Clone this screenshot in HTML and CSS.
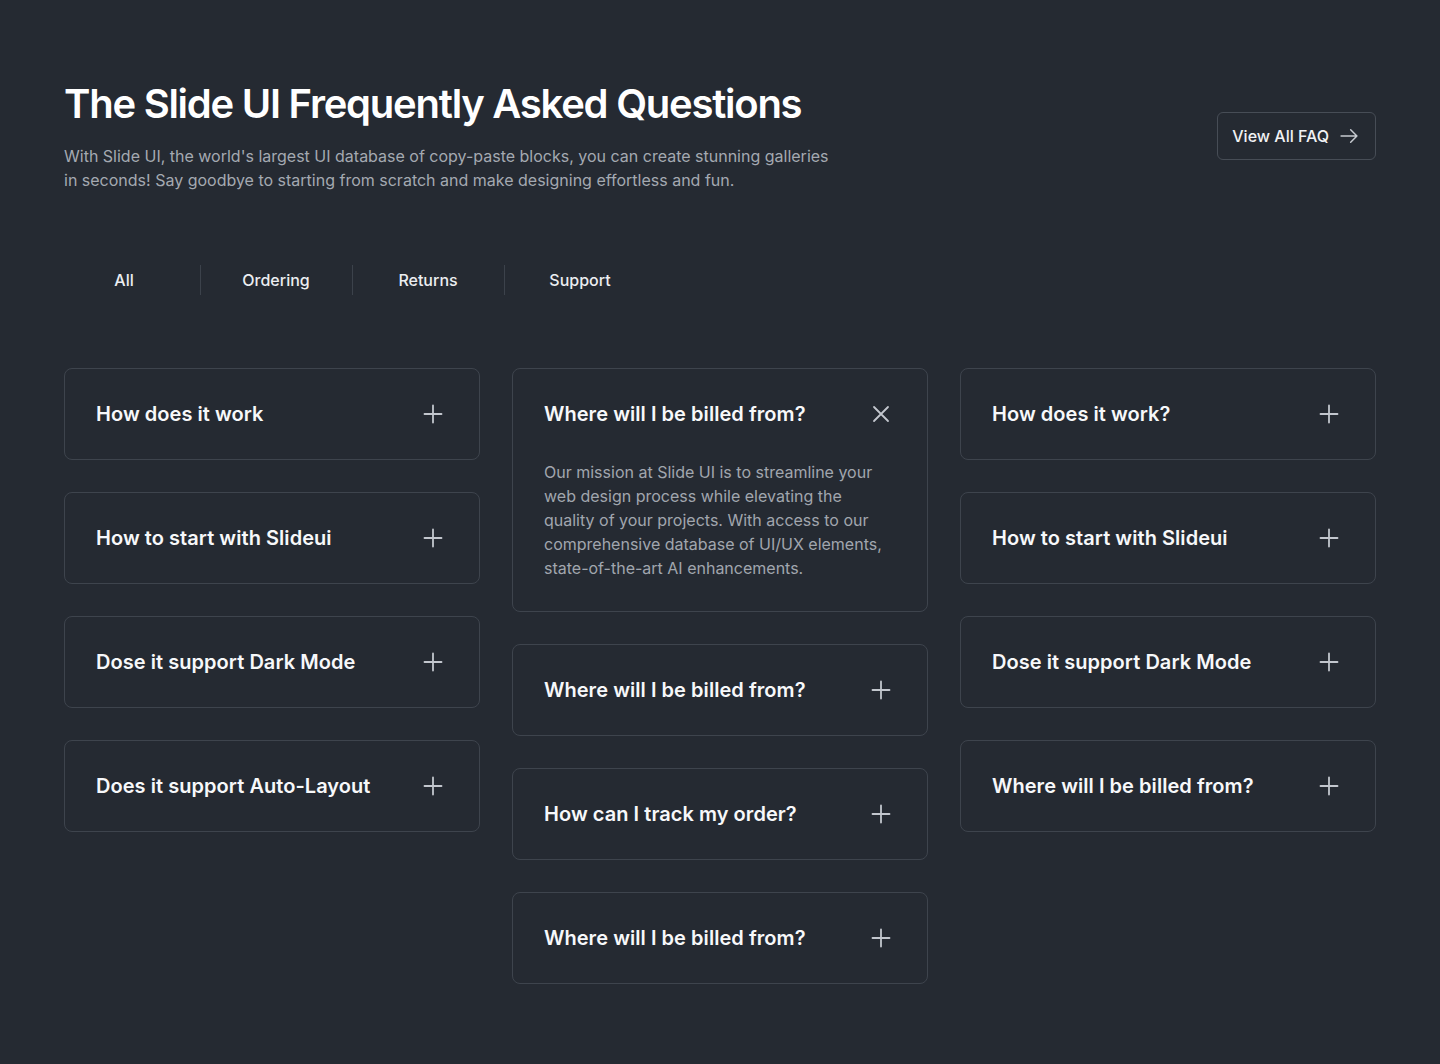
FILE: index.html
```html
<!DOCTYPE html>
<html lang="en">
<head>
<meta charset="utf-8">
<title>FAQ</title>
<link rel="stylesheet" href="styles.css">
</head>
<body>
<main class="page">
  <header class="top">
    <div class="intro">
      <h1 class="title">The Slide UI Frequently Asked Questions</h1>
      <p class="lead">With Slide UI, the world's largest UI database of copy-paste blocks, you can create stunning galleries in seconds! Say goodbye to starting from scratch and make designing effortless and fun.</p>
    </div>
    <a class="btn" href="#">View All FAQ
      <svg class="btn-icon" viewBox="0 0 24 24" fill="none" stroke="currentColor" stroke-width="1.8" stroke-linecap="round" stroke-linejoin="round"><path d="M2.5 12h19M14 4.5l7.5 7.5-7.5 7.5"/></svg>
    </a>
  </header>

  <nav class="tabs">
    <span class="tab">All</span>
    <span class="divider"></span>
    <span class="tab">Ordering</span>
    <span class="divider"></span>
    <span class="tab">Returns</span>
    <span class="divider"></span>
    <span class="tab">Support</span>
  </nav>

  <section class="grid">
    <div class="col">
      <div class="card"><div class="card-head"><span class="q">How does it work</span><svg class="ico" viewBox="0 0 24 24" fill="none" stroke="currentColor" stroke-width="1.8" stroke-linecap="round"><path d="M12 3.5v17M3.5 12h17"/></svg></div></div>
      <div class="card"><div class="card-head"><span class="q">How to start with Slideui</span><svg class="ico" viewBox="0 0 24 24" fill="none" stroke="currentColor" stroke-width="1.8" stroke-linecap="round"><path d="M12 3.5v17M3.5 12h17"/></svg></div></div>
      <div class="card"><div class="card-head"><span class="q">Dose it support Dark Mode</span><svg class="ico" viewBox="0 0 24 24" fill="none" stroke="currentColor" stroke-width="1.8" stroke-linecap="round"><path d="M12 3.5v17M3.5 12h17"/></svg></div></div>
      <div class="card"><div class="card-head"><span class="q">Does it support Auto-Layout</span><svg class="ico" viewBox="0 0 24 24" fill="none" stroke="currentColor" stroke-width="1.8" stroke-linecap="round"><path d="M12 3.5v17M3.5 12h17"/></svg></div></div>
    </div>
    <div class="col">
      <div class="card open">
        <div class="card-head"><span class="q">Where will I be billed from?</span><svg class="ico" viewBox="0 0 24 24" fill="none" stroke="currentColor" stroke-width="1.8" stroke-linecap="round"><path d="M5 5l14 14M19 5L5 19"/></svg></div>
        <p class="answer">Our mission at Slide UI is to streamline your web design process while elevating the quality of your projects. With access to our comprehensive database of UI/UX elements, state-of-the-art AI enhancements.</p>
      </div>
      <div class="card"><div class="card-head"><span class="q">Where will I be billed from?</span><svg class="ico" viewBox="0 0 24 24" fill="none" stroke="currentColor" stroke-width="1.8" stroke-linecap="round"><path d="M12 3.5v17M3.5 12h17"/></svg></div></div>
      <div class="card"><div class="card-head"><span class="q">How can I track my order?</span><svg class="ico" viewBox="0 0 24 24" fill="none" stroke="currentColor" stroke-width="1.8" stroke-linecap="round"><path d="M12 3.5v17M3.5 12h17"/></svg></div></div>
      <div class="card"><div class="card-head"><span class="q">Where will I be billed from?</span><svg class="ico" viewBox="0 0 24 24" fill="none" stroke="currentColor" stroke-width="1.8" stroke-linecap="round"><path d="M12 3.5v17M3.5 12h17"/></svg></div></div>
    </div>
    <div class="col">
      <div class="card"><div class="card-head"><span class="q">How does it work?</span><svg class="ico" viewBox="0 0 24 24" fill="none" stroke="currentColor" stroke-width="1.8" stroke-linecap="round"><path d="M12 3.5v17M3.5 12h17"/></svg></div></div>
      <div class="card"><div class="card-head"><span class="q">How to start with Slideui</span><svg class="ico" viewBox="0 0 24 24" fill="none" stroke="currentColor" stroke-width="1.8" stroke-linecap="round"><path d="M12 3.5v17M3.5 12h17"/></svg></div></div>
      <div class="card"><div class="card-head"><span class="q">Dose it support Dark Mode</span><svg class="ico" viewBox="0 0 24 24" fill="none" stroke="currentColor" stroke-width="1.8" stroke-linecap="round"><path d="M12 3.5v17M3.5 12h17"/></svg></div></div>
      <div class="card"><div class="card-head"><span class="q">Where will I be billed from?</span><svg class="ico" viewBox="0 0 24 24" fill="none" stroke="currentColor" stroke-width="1.8" stroke-linecap="round"><path d="M12 3.5v17M3.5 12h17"/></svg></div></div>
    </div>
  </section>
</main>
</body>
</html>
```
FILE: styles.css
```css
* { box-sizing: border-box; }
html, body { margin: 0; padding: 0; }
body {
  background: #252a32;
  color: #f5f6f8;
  font-family: Inter, "Noto Sans", sans-serif;
  -webkit-font-smoothing: antialiased;
}
.page {
  padding: 80px 64px 80px;
  min-height: 1064px;
}
.top {
  display: flex;
  justify-content: space-between;
  align-items: center;
}
.title {
  margin: 0;
  font-size: 40px;
  line-height: 48px;
  font-weight: 600;
  letter-spacing: -1.25px;
  color: #ffffff;
}
.lead {
  margin: 16px 0 0;
  max-width: 770px;
  font-size: 16px;
  line-height: 24px;
  color: #a4a9b1;
}
.btn {
  display: flex;
  align-items: center;
  gap: 10px;
  height: 48px;
  padding: 0 16px 0 14px;
  border: 1px solid #474d56;
  border-radius: 6px;
  color: #f1f2f4;
  text-decoration: none;
  font-size: 16px;
  font-weight: 500;
}
.btn-icon { width: 20px; height: 20px; color: #c6cad0; }
.tabs {
  display: flex;
  align-items: center;
  height: 48px;
  margin-top: 64px;
}
.tab {
  width: 120px;
  text-align: center;
  font-size: 16px;
  font-weight: 500;
  color: #eceef1;
}
.divider {
  width: 1px;
  height: 30px;
  margin: 0 15px 0 16px;
  background: #3c424b;
}
.grid {
  margin-top: 64px;
  display: grid;
  grid-template-columns: repeat(3, 1fr);
  gap: 32px;
  align-items: start;
}
.col {
  display: flex;
  flex-direction: column;
  gap: 32px;
}
.card {
  border: 1px solid #3e444d;
  border-radius: 8px;
}
.card-head {
  height: 90px;
  display: flex;
  align-items: center;
  justify-content: space-between;
  padding: 0 34px 0 31px;
}
.q {
  font-size: 20px;
  font-weight: 600;
  color: #f7f8fa;
  letter-spacing: 0.05px;
}
.ico { width: 24px; height: 24px; color: #c3c7ce; flex: none; }
.answer {
  margin: 0;
  padding: 1px 34px 31px 31px;
  font-size: 16px;
  line-height: 24px;
  color: #a1a6ae;
}
```
